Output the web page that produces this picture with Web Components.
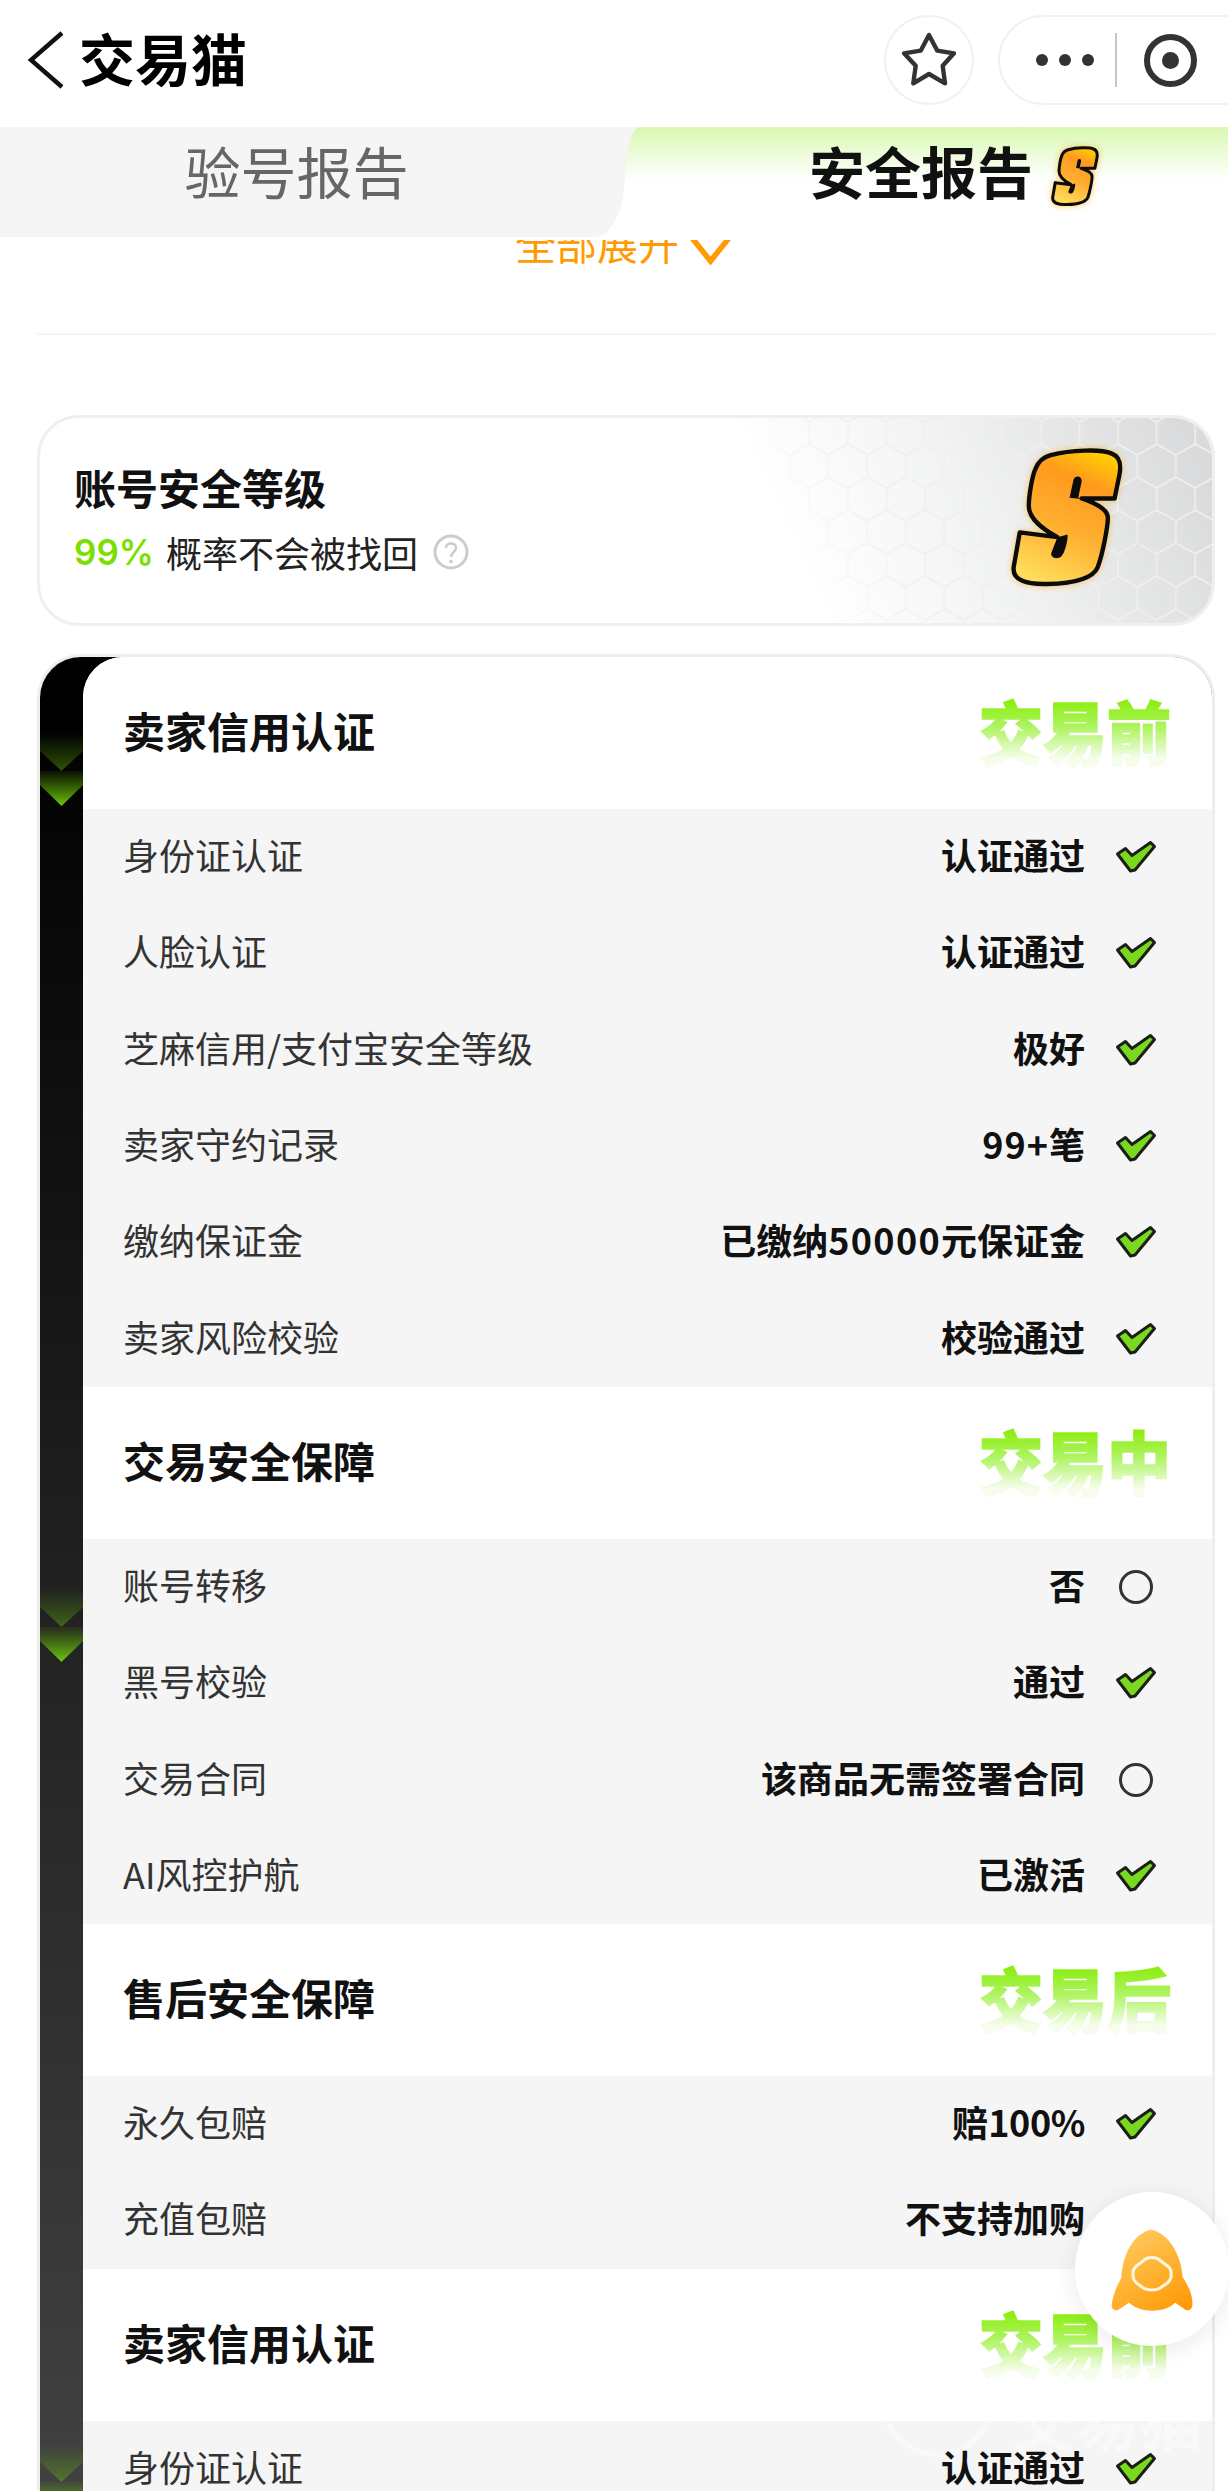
<!DOCTYPE html>
<html lang="zh"><head><meta charset="utf-8"><title>交易猫</title>
<style>
html,body{margin:0;padding:0;background:#fff;height:2491px;overflow:hidden;font-family:"Noto Sans CJK SC","Liberation Sans",sans-serif}
</style></head><body>
<report-page>
  <nav-bar>交易猫</nav-bar>
  <report-tabs></report-tabs>
  <report-body>
    <level-card></level-card>
    <safety-panel>
      <report-section stage="交易前" heading="卖家信用认证">
        <report-row label="身份证认证">认证通过</report-row>
        <report-row label="人脸认证">认证通过</report-row>
        <report-row label="芝麻信用/支付宝安全等级">极好</report-row>
        <report-row label="卖家守约记录"><span style="letter-spacing:1px">99+</span>笔</report-row>
        <report-row label="缴纳保证金">已缴纳<span style="letter-spacing:1.3px">50000</span>元保证金</report-row>
        <report-row label="卖家风险校验">校验通过</report-row>
      </report-section>
      <report-section stage="交易中" heading="交易安全保障">
        <report-row label="账号转移" state="none">否</report-row>
        <report-row label="黑号校验">通过</report-row>
        <report-row label="交易合同" state="none">该商品无需签署合同</report-row>
        <report-row label="AI风控护航">已激活</report-row>
      </report-section>
      <report-section stage="交易后" heading="售后安全保障">
        <report-row label="永久包赔">赔<span style="letter-spacing:-.4px">100%</span></report-row>
        <report-row label="充值包赔" state="none">不支持加购</report-row>
      </report-section>
      <report-section stage="交易前" heading="卖家信用认证" mark>
        <report-row label="身份证认证">认证通过</report-row>
        <report-row label="人脸认证">认证通过</report-row>
      </report-section>
    </safety-panel>
  </report-body>
  <float-rocket></float-rocket>
</report-page>
<script>
const def=(name,html,init)=>customElements.define(name,class extends HTMLElement{
  constructor(){super();this.attachShadow({mode:"open"}).innerHTML=typeof html==="function"?html(this):html;}
  connectedCallback(){if(init)init(this,this.shadowRoot);}
});
const sPath=`<path d="M270 110C330 95 420 92 450 105C478 115 480 140 474 170L460 238L362 238C400 250 440 270 440 295C440 320 425 400 410 440C395 475 340 488 260 490C200 492 155 480 160 440L178 338L290 352C250 330 205 300 205 260C205 230 215 170 225 150C235 125 250 115 270 110Z" fill="url(#sg)" stroke="#0c0c0c" style="stroke-width:var(--sw,13px)" stroke-linejoin="round"/>
<path d="M338 182C344 168 364 172 362 188L352 236L382 242L326 236Z" fill="#0c0c0c"/>
<path d="M290 352L320 344C322 360 312 398 302 408C288 420 268 412 272 398Z" fill="#0c0c0c"/>`;
def("s-badge",`<style>:host{display:inline-block;line-height:0}svg{width:100%;height:100%;overflow:visible;filter:drop-shadow(0 0 3px rgba(255,180,40,.75))}</style>
<svg viewBox="155 98 327 395" preserveAspectRatio="none"><defs><linearGradient id="sg" x1=".7" y1="0" x2=".35" y2="1"><stop offset="0" stop-color="#ffc905"/><stop offset=".22" stop-color="#ff9a1e"/><stop offset=".6" stop-color="#ffb031"/><stop offset="1" stop-color="#ffdc5a"/></linearGradient></defs>${sPath}</svg>`);
def("report-page",`<style>:host{display:block;position:relative;width:1228px;height:2491px;overflow:hidden;background:#fff}</style><slot></slot>`);
def("nav-bar",`<style>
:host{display:flex;align-items:center;height:127px;background:#fff;box-sizing:border-box;padding:0 0 7px 27px;color:#000}
.back{width:38px;height:60px;flex:none}
.t{font-size:56px;font-weight:700;line-height:60px;margin:0 0 6px 14px;flex:1;letter-spacing:0}
.star{width:90px;height:90px;border:2px solid #f1f1f1;border-radius:50%;box-sizing:border-box;flex:none}
.star svg{display:block;width:86px;height:86px}
.cap{width:260px;height:90px;flex:none;box-sizing:border-box;border:2px solid #f1f1f1;border-right:none;border-radius:45px 0 0 45px;margin:0 -30px 0 24px;display:flex;align-items:center;padding-left:36px}
.dots{display:flex;gap:11px}.dots i{width:12px;height:12px;border-radius:50%;background:#333}
.sep{width:1.5px;height:54px;background:#c6c6c6;margin-left:21px}
.tg{width:53px;height:53px;box-sizing:border-box;border:6px solid #333;border-radius:50%;margin-left:27px;display:flex;align-items:center;justify-content:center}
.tg i{width:17px;height:17px;border-radius:50%;background:#333}
</style>
<svg class="back" viewBox="0 0 38 60"><path d="M35 3L4 30L35 57" fill="none" stroke="#111" stroke-width="4.4"/></svg>
<span class="t"><slot></slot></span>
<span class="star"><svg viewBox="2 2 86 86"><path d="M45 20L53.3 35.7L70 38.3L58.7 50.7L61 68.3L45 59L29.3 68.3L31.7 50.7L20 38.3L36.7 35.7Z" fill="none" stroke="#333" stroke-width="4.4" stroke-linejoin="round"/></svg></span>
<span class="cap"><span class="dots"><i></i><i></i><i></i></span><span class="sep"></span><span class="tg"><i></i></span></span>`);
def("report-tabs",`<style>
:host{display:flex;height:113px;box-sizing:border-box;padding-bottom:3px;background:linear-gradient(#f5f5f5 0 55px,#fff 55px);background-clip:content-box}
.l{width:625px;flex:none;background:#f5f5f5;border-bottom-right-radius:30px 62px;display:flex;align-items:center;justify-content:center;padding-right:32px;box-sizing:border-box;padding-bottom:25px;font-size:56px;color:#666;letter-spacing:0}
.r{flex:1;background:linear-gradient(#d8f8b0,#fff 48%);border-top-left-radius:15px 55px;display:flex;align-items:center;padding:0 0 25px 184px;box-sizing:border-box;font-size:56px;font-weight:700;color:#111}
s-badge{width:46px;height:57px;margin-left:19px;position:relative;top:7px;--sw:21px}
</style><div class="l">验号报告</div><div class="r">安全报告<s-badge></s-badge></div>`);
def("report-body",`<style>
:host{display:block;height:2251px;overflow:hidden;padding:0 13px 0 37px;box-sizing:border-box}
.more{height:50px;margin-top:-23px;display:flex;align-items:center;justify-content:center;gap:11px;color:#ff9a00;font-size:41px;line-height:50px;padding-right:6px}
.more svg{width:41px;height:26px;margin-top:22px}
hr{border:0;height:2px;background:#f4f4f4;margin:66px 0 80px}
</style>
<div class="more">全部展开<svg viewBox="0 0 41 26"><path d="M2 -2L20.5 21L39 -2" fill="none" stroke="#ff9a00" stroke-width="5.5"/></svg></div><hr><slot></slot>`);
def("level-card",`<style>
:host{display:block;position:relative;height:211px;box-sizing:border-box;border:3px solid #efefef;border-radius:42px;overflow:hidden;margin-bottom:28px;padding:38px 0 0 34px;background:#fff}
.deco{position:absolute;right:0;top:0;width:480px;height:100%}
.deco svg{display:block;width:100%;height:100%}
.txt{position:relative}
h2{margin:0;font-size:42px;line-height:62px;font-weight:700;color:#111}
p{margin:9px 0 0;display:flex;align-items:center;font-size:36px;line-height:50px;color:#222}
b{font-family:"Inter","Liberation Sans",sans-serif;font-weight:600;color:#7be000;font-size:35px;margin-right:12px}
.q{width:36px;height:36px;margin-left:15px}
s-badge{position:absolute;left:972px;top:33px;width:110px;height:134px}
</style>
<div class="deco"><svg viewBox="0 0 480 205" preserveAspectRatio="none"><defs>
<linearGradient id="bg" x1="0" y1=".5" x2="1" y2=".3"><stop offset=".1" stop-color="#fff"/><stop offset=".5" stop-color="#f1f2f2"/><stop offset="1" stop-color="#d9dadb"/></linearGradient>
<pattern id="hx" width="38.6" height="66" patternUnits="userSpaceOnUse" x="0" y="-7"><path d="M0 11L19.3 0L38.6 11L38.6 33L19.3 44L0 33ZM19.3 44L19.3 66M0 33L0 11" fill="none" stroke="#efefef" stroke-width="1.6"/></pattern>
<linearGradient id="fd" x1="0" y1=".5" x2="1" y2=".3"><stop offset=".1" stop-color="#000"/><stop offset=".35" stop-color="#fff"/></linearGradient>
<mask id="mk"><rect width="480" height="205" fill="url(#fd)"/></mask></defs>
<rect width="480" height="205" fill="url(#bg)"/><rect width="480" height="205" fill="url(#hx)" mask="url(#mk)"/></svg></div>
<div class="txt"><h2>账号安全等级</h2><p><b>99%</b>概率不会被找回<svg class="q" viewBox="0 0 36 36"><circle cx="18" cy="18" r="16" fill="none" stroke="#ccc" stroke-width="3"/><path d="M13 14C13 8 23 8 23 14C23 18 18 18 18 23" fill="none" stroke="#ccc" stroke-width="2.6"/><circle cx="18" cy="27.5" r="1.8" fill="#ccc"/></svg></p></div>
<s-badge></s-badge>`);
def("arrow-pair",`<style>:host{display:block;height:855.5px;padding-top:76px;box-sizing:border-box}
svg{display:block;width:43px;height:74px}</style>
<svg viewBox="0 0 43 74"><defs>
<linearGradient id="a1" x1="0" y1="0" x2="0" y2="1"><stop offset="0" stop-color="#5cb000" stop-opacity="0"/><stop offset="1" stop-color="#6ec00f" stop-opacity=".42"/></linearGradient>
<linearGradient id="a2" x1="0" y1="0" x2="0" y2="1"><stop offset="0" stop-color="#5cb000" stop-opacity=".08"/><stop offset="1" stop-color="#6fc511"/></linearGradient></defs>
<path d="M0 0H43V18L21.5 38L0 18Z" fill="url(#a1)"/><path d="M0 38H43V52L21.5 73L0 52Z" fill="url(#a2)"/></svg>`);
def("safety-panel",`<style>
:host{display:grid;grid-template-columns:43px 1fr;box-sizing:border-box;border:3px solid #eee;border-bottom:0;border-radius:44px 44px 0 0;overflow:hidden;background:linear-gradient(#000 0,#000 30px,#444 1900px)}
.strip{overflow:hidden;min-width:0;height:0;min-height:100%}
.main{background:#fff;border-top-left-radius:40px;overflow:hidden}
</style>
<div class="strip"><arrow-pair></arrow-pair><arrow-pair></arrow-pair><arrow-pair></arrow-pair></div><div class="main"><slot></slot></div>`);
def("water-mark",`<style>:host{position:absolute;left:798px;top:-77px;height:113px;display:flex;align-items:flex-end;gap:17px;color:rgba(255,255,255,.45);font-size:64px;font-weight:700;line-height:80px;pointer-events:none}
i{width:113px;height:113px;border:5px solid rgba(255,255,255,.45);border-radius:50%;box-sizing:border-box;flex:none}</style><i></i><span>交易猫</span>`);
def("report-section",el=>`<style>
:host{display:block}
header{height:152px;background:#fff;display:flex;align-items:center;justify-content:space-between;padding:0 41px 0 40px;box-sizing:border-box}
h3{margin:0 0 6px;font-size:42px;font-weight:700;color:#111;line-height:60px}
.st{font-size:64px;font-weight:900;line-height:70px;letter-spacing:0;color:transparent;-webkit-text-stroke:1.6px transparent;background:linear-gradient(#8bee10 12%,#b0f466 48%,#f6fdec 88%);-webkit-background-clip:text;background-clip:text;transform:translateY(-3px) scaleY(1.08)}
.rows{background:#f5f5f5;position:relative;overflow:hidden}
::slotted(report-row){position:relative}
</style><header><h3>${el.getAttribute("heading")}</h3><span class="st">${el.getAttribute("stage")}</span></header><div class="rows">${el.hasAttribute("mark")?"<water-mark></water-mark>":""}<slot></slot></div>`);
def("report-row",el=>{
 const none=el.getAttribute("state")==="none";
 return `<style>
:host{display:flex;align-items:center;height:96.3px;box-sizing:border-box;padding:0 55.5px 6px 40px;font-size:36px;color:#333}
.l{flex:1}.v{font-weight:700;color:#111}
svg{width:42px;height:34px;margin:6px 0 0 29.5px;flex:none;overflow:visible}
</style><span class="l">${el.getAttribute("label")}</span><span class="v"><slot></slot></span>`+
 (none?`<svg viewBox="0 0 42 34"><circle cx="21" cy="17" r="15.5" fill="none" stroke="#333" stroke-width="3"/></svg>`
 :`<svg viewBox="0 0 42 34"><path d="M2.5 14L10.5 8.5L17 15.5L35.5 2.5L39.5 6.5L20 30L15.5 31Z" fill="#7ad81e" stroke="#1c1f18" stroke-width="3" stroke-linejoin="round"/></svg>`);
});
def("float-rocket",`<style>:host{position:absolute;left:1075px;top:2192px;width:154px;height:154px;border-radius:50%;background:#fff;box-shadow:0 4px 26px rgba(0,0,0,.09);display:block}
svg{position:absolute;left:35px;top:36px;width:84px;height:84px}</style>
<svg viewBox="215 175 245 245"><defs><linearGradient id="rk" x1=".2" y1="0" x2=".85" y2="1"><stop offset="0" stop-color="#ffcb62"/><stop offset="1" stop-color="#ff9a06"/></linearGradient></defs>
<path d="M335 180C385 190 422 250 427 318C445 345 458 375 455 402C452 418 438 418 428 408L405 393C385 412 360 416 338 416C315 416 290 410 270 393L245 410C233 420 220 415 220 400C222 372 235 345 248 320C252 250 285 190 335 180Z" fill="url(#rk)"/>
<path d="M282 310C280 285 305 280 312 270C325 258 350 258 362 270C372 282 396 285 393 310C396 335 372 340 362 350C348 358 325 358 312 350C302 340 280 335 282 310Z" fill="none" stroke="#fff6dc" stroke-width="9"/></svg>`);
</script>
</body></html>
